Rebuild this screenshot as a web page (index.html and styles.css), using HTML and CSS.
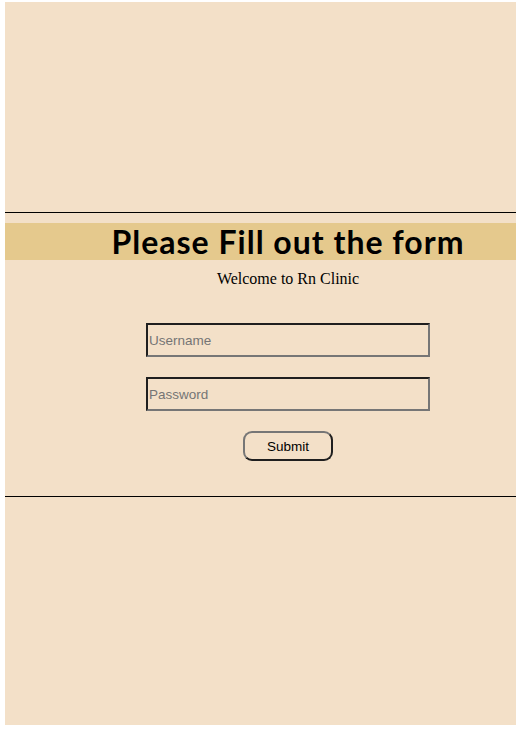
FILE: index.html
```html
<!DOCTYPE html>
<html>
<head>
<meta charset="utf-8">
<link rel="stylesheet" href="styles.css">
</head>
<body>
<div class="page">
  <hr class="rule rule-top">
  <h1 class="banner"><span class="banner-text">Please Fill out the form</span></h1>
  <form class="form">
    <p class="welcome">Welcome to Rn Clinic</p>
    <input class="field field-first" type="text" placeholder="Username">
    <input class="field" type="password" placeholder="Password">
    <button class="submit" type="button">Submit</button>
  </form>
  <hr class="rule rule-bottom">
</div>
</body>
</html>
```
FILE: styles.css
```css
html, body {
  margin: 0;
  padding: 0;
  background: #ffffff;
}
.page {
  margin: 2px 0 0 5px;
  width: 511px;
  height: 723px;
  background: #f3e0c8;
  display: flex;
  flex-direction: column;
  padding-top: 210px;
  box-sizing: border-box;
}
.rule {
  margin: 0;
  border: 0;
  border-top: 1px solid #000;
  height: 0;
}
.rule-top {
  margin-top: 0;
}
.banner {
  margin: 10px 0 0 0;
  height: 37px;
  background: #e5c98d;
  display: flex;
  align-items: center;
  justify-content: center;
  padding-left: 55px;
  font-family: "Lato", "DejaVu Sans", sans-serif;
  font-weight: 700;
  font-size: 32px;
  letter-spacing: 1px;
  color: #000;
  line-height: 37px;
}
.form {
  display: flex;
  flex-direction: column;
  align-items: center;
  padding-left: 55px;
  margin: 0;
}
.welcome {
  margin: 9px 0 0 0;
  font-family: "Liberation Serif", serif;
  font-size: 16px;
  line-height: 20px;
  color: #000;
}
.field {
  width: 284px;
  height: 34px;
  box-sizing: border-box;
  margin: 20px 0 0 0;
  padding: 0 1px;
  background: transparent;
  border: 2px solid;
  border-color: #1f1f1f #767676 #767676 #1f1f1f;
  font-family: "Liberation Sans", Arial, sans-serif;
  font-size: 13.5px;
  color: #000;
  outline: none;
}
.field-first {
  margin-top: 34px;
}
.field::placeholder {
  color: #757575;
}
.submit {
  margin-top: 20px;
  width: 90px;
  height: 30px;
  box-sizing: border-box;
  border: 2px solid;
  border-color: #767676 #1f1f1f #1f1f1f #767676;
  border-radius: 9px;
  background: transparent;
  font-family: "Liberation Sans", Arial, sans-serif;
  font-size: 13.5px;
  color: #000;
  padding: 0;
}
.rule-bottom {
  margin-top: 35px;
}
```
